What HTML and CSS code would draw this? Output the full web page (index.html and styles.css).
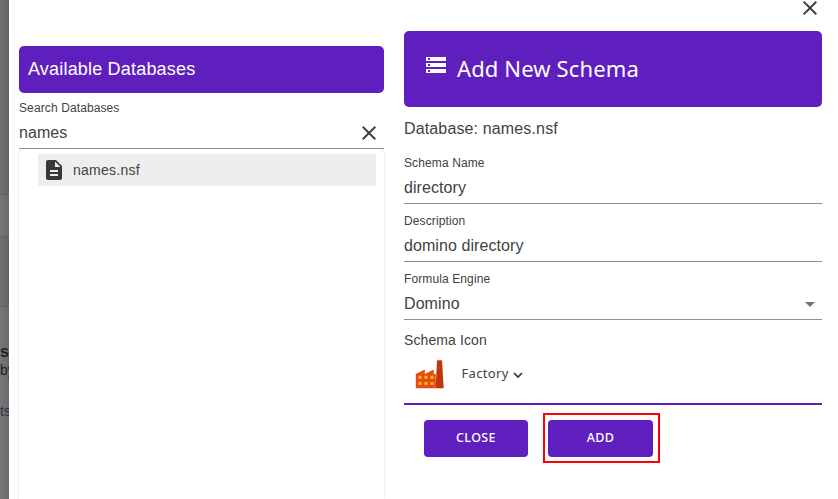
FILE: index.html
```html
<!DOCTYPE html>
<html lang="en">
<head>
<meta charset="utf-8">
<title>Add New Schema</title>
<link rel="stylesheet" href="styles.css">
</head>
<body>
<div class="app">
  <aside class="backdrop">
    <div class="band band-top"></div>
    <div class="band band-mid"></div>
    <div class="band band-low"></div>
    <div class="peek"><b>s.</b><span>by</span><span class="peek-link">ts</span></div>
  </aside>
  <main class="dialog">
    <section class="databases">
      <h2 class="panel-title">Available Databases</h2>
      <label class="label">Search Databases</label>
      <div class="input search">
        <span>names</span>
        <svg width="24" height="24" viewBox="0 0 24 24"><path d="M19 6.41 17.59 5 12 10.59 6.41 5 5 6.41 10.59 12 5 17.59 6.41 19 12 13.41 17.59 19 19 17.59 13.41 12z"/></svg>
      </div>
      <div class="results">
        <div class="result">
          <svg width="24" height="24" viewBox="0 0 24 24"><path d="M14 2H6c-1.100 0-1.990.9-1.990 2L4 20c0 1.100.89 2 1.990 2H18c1.100 0 2-.9 2-2V8l-6-6zm2 16H8v-2h8v2zm0-4H8v-2h8v2zm-3-5V3.500L18.500 9H13z"/></svg>
          <span>names.nsf</span>
        </div>
      </div>
    </section>
    <section class="schema">
      <div class="close-row">
        <svg width="24" height="24" viewBox="0 0 24 24"><path d="M19 6.41 17.59 5 12 10.59 6.41 5 5 6.41 10.59 12 5 17.59 6.41 19 12 13.41 17.59 19 19 17.59 13.41 12z"/></svg>
      </div>
      <h1 class="banner">
        <svg width="24" height="24" viewBox="0 0 24 24"><path d="M2 20h20v-4H2v4zm2-3h2v2H4v-2zM2 4v4h20V4H2zm4 3H4V5h2v2zm-4 7h20v-4H2v4zm2-3h2v2H4v-2z"/></svg>
        <span>Add New Schema</span>
      </h1>
      <p class="database">Database: names.nsf</p>
      <label class="label">Schema Name</label>
      <div class="input"><span>directory</span></div>
      <label class="label">Description</label>
      <div class="input"><span>domino directory</span></div>
      <label class="label">Formula Engine</label>
      <div class="input select"><span>Domino</span>
        <svg width="24" height="24" viewBox="0 0 24 24"><path d="m7 10 5 5 5-5z"/></svg>
      </div>
      <p class="icon-label">Schema Icon</p>
      <div class="icon-picker">
        <svg class="factory" width="30" height="30" viewBox="0 0 30 30">
          <path fill="#e64a19" d="M.8 29.200V15l9-4.500V15l9-4.500V15h2v14.200z"/>
          <path fill="#bf360c" d="M22 1h5l1.700 28.200h-8z"/>
          <path fill="#e7a08a" d="M21.800 .8h5.200v.8h-5.200z"/>
          <path fill="#ffc107" d="M3.500 16.800h3v3h-3zm6 0h3v3h-3zm6 0h3v3h-3zM3.500 23h3v3h-3zm6 0h3v3h-3zm6 0h3v3h-3z"/>
        </svg>
        <span>Factory</span>
        <svg class="chevron" width="10" height="7" viewBox="0 0 10 7"><path d="m1 1 4 4 4-4"/></svg>
      </div>
      <div class="actions">
        <button class="button close">CLOSE</button>
        <div class="highlight"><button class="button">ADD</button></div>
      </div>
    </section>
  </main>
</div>
</body>
</html>
```
FILE: styles.css
```css
* { box-sizing: border-box; }
body { margin: 0; font-family: "Liberation Sans", Arial, sans-serif; color: #424242; background: #fff; }
h1, h2, p { margin: 0; font-weight: 400; }
svg { display: block; flex: none; }
span { white-space: nowrap; }
.app { display: flex; height: 499px; overflow: hidden; }
.backdrop { width: 9px; flex: none; overflow: hidden; background: linear-gradient(90deg, #777, #696969); color: #222; }
.band { border-bottom: 1px solid #646464; }
.band-top { height: 195px; background: linear-gradient(90deg, #717171, #646464); }
.band-mid { height: 42px; }
.band-low { height: 70px; background: linear-gradient(90deg, #707070, #636363); }
.peek { display: flex; flex-direction: column; padding-top: 36px; font-size: 14px; line-height: 18px; }
.peek b { font-size: 16px; line-height: 18px; }
.peek-link { margin-top: 23px; color: #26364d; }
.dialog { display: flex; flex: 1; gap: 20px; padding: 0 16px 0 10px; background: #fff; }
.databases { width: 365px; display: flex; flex-direction: column; padding-top: 46px; }
.panel-title { height: 47px; flex: none; margin-bottom: 5px; padding-left: 9px; border-radius: 5px; background: #5f1ebe; color: #fff; font-size: 18px; line-height: 46px; letter-spacing: .19px; }
.label { display: block; height: 20px; flex: none; font-size: 12px; line-height: 20px; letter-spacing: .11px; }
.input { display: flex; height: 31px; flex: none; justify-content: space-between; border-bottom: 1px solid #8f8f8f; font-size: 16px; line-height: 30px; letter-spacing: .08px; }
.search { fill: #424242; }
.search svg { margin: 3px 3px 0 0; }
.results { flex: 1; margin-top: 1px; padding: 4px 8px 0 19px; border-radius: 4px 4px 0 0; box-shadow: 0 0 2px rgba(0,0,0,.24); clip-path: inset(0 -3px); }
.result { display: flex; gap: 7px; align-items: center; height: 32px; padding-left: 4px; background: #eee; fill: #383838; font-size: 14px; letter-spacing: .25px; }
.schema { width: 418px; }
.close-row { display: flex; justify-content: flex-end; height: 31px; fill: #424242; }
.close-row svg { margin: -4px 0 0; }
.banner { display: flex; height: 76px; padding: 22px 0 0 20px; gap: 9px; border-radius: 5px; background: #5f1ebe; color: #fff; fill: #fff; font: 400 22px/30px "Noto Sans", sans-serif; letter-spacing: .13px; }
.database { height: 46px; font-size: 16px; line-height: 43px; letter-spacing: .14px; }
.schema .input { height: 31px; margin-bottom: 7px; }
.select svg { margin-top: 3px; fill: #757575; }
.icon-label { height: 28px; font-size: 14px; line-height: 26px; letter-spacing: .1px; }
.icon-picker { display: flex; height: 50px; padding: 4px 0 0 11px; border-bottom: 2px solid #5f1ebe; font: 13px/20px "Noto Sans", sans-serif; letter-spacing: .35px; }
.factory { margin-right: 16.5px; }
.chevron { margin: 13px 0 0 4px; fill: none; stroke: #333; stroke-width: 1.700; }
.icon-picker span { margin-top: 4px; }
.actions { display: flex; gap: 15px; padding: 8px 0 0 20px; }
.button { width: 105px; height: 37px; padding: 0 0 2px; border: 0; border-radius: 4px; background: #5f1ebe; color: #fff; font: 500 12.500px/35px "Noto Sans", sans-serif; letter-spacing: .4px; }
.close { width: 104px; margin-top: 7px; }
.highlight { width: 117px; height: 50px; padding: 5px 0 0 3px; border: 2px solid #f00; }
```
